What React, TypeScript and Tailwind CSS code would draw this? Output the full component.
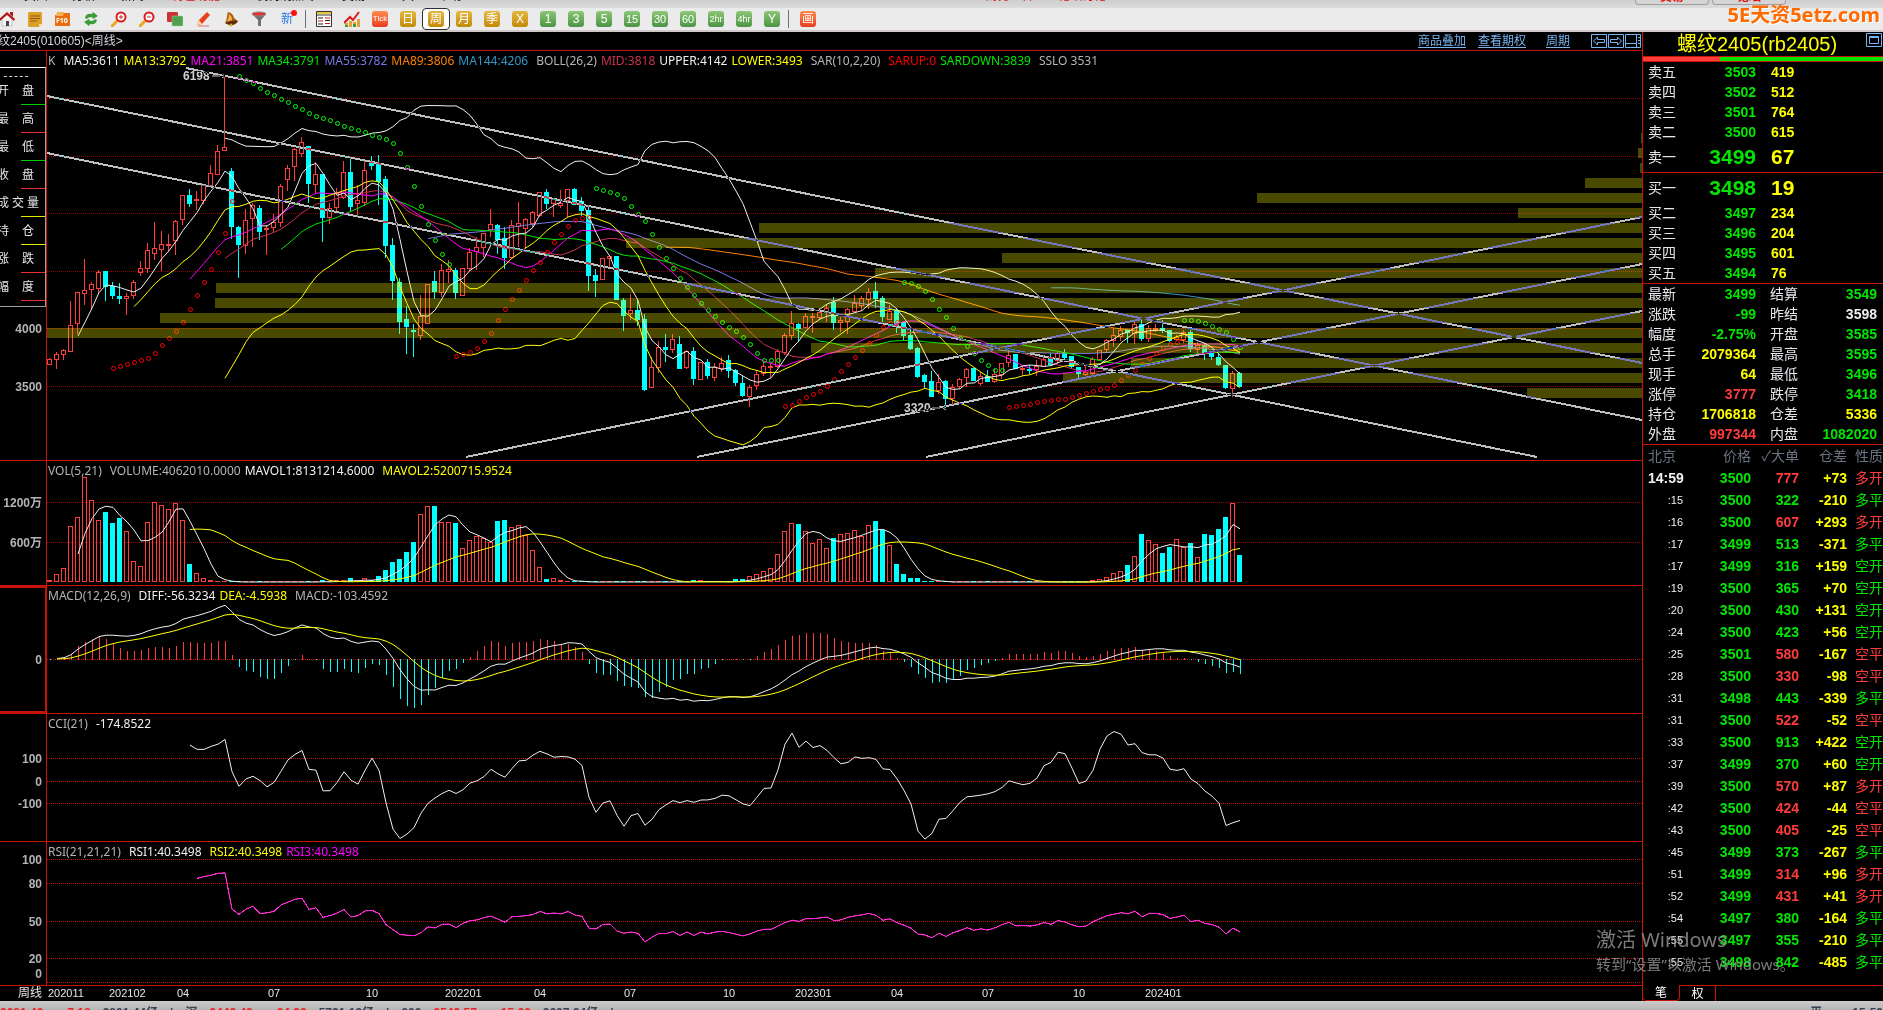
import { ReactNode } from "react";

const UI = "font-['Noto_Sans','Noto_Sans_CJK_SC',sans-serif]";
const NUM = "font-['Liberation_Sans','Noto_Sans_CJK_SC',sans-serif]";

const RED = "#ff3c3c";
const CYAN = "#00ffff";
const STEP = 7;

// one bar per week: [high, body top, body bottom, low, volume], negative volume = falling week
const BARS = [
  [358, 359, 364, 364, 2], [352, 354, 359, 369, 8], [349, 350, 354, 360, 14], [301, 325, 351, 351, 56],
  [292, 292, 323, 334, 65], [259, 290, 293, 305, 105], [282, 284, 289, 310, 82], [270, 272, 288, 293, 62],
  [271, 271, 287, 301, -70], [282, 286, 296, 299, -59], [283, 296, 299, 304, -64], [293, 296, 298, 315, 51],
  [280, 282, 295, 299, 21], [261, 268, 272, 276, 16], [243, 250, 268, 273, 60], [222, 248, 253, 260, 80],
  [231, 244, 249, 271, 77], [234, 244, 245, 252, 73], [220, 221, 240, 255, 79], [195, 195, 219, 225, 62],
  [189, 195, 204, 207, -18], [191, 199, 200, 210, 9], [185, 185, 200, 204, 4], [165, 173, 185, 185, 2],
  [145, 151, 174, 174, 1], [76, 147, 150, 151, 1], [168, 171, 227, 239, -1], [226, 227, 245, 278, -1],
  [209, 220, 245, 254, 1], [203, 205, 218, 247, 1], [205, 208, 232, 240, -1], [225, 228, 229, 255, 1],
  [214, 222, 227, 232, 1], [184, 186, 222, 227, 1], [165, 168, 179, 191, 1], [148, 149, 166, 181, 1],
  [137, 142, 153, 157, 1], [146, 146, 184, 203, -1], [162, 174, 184, 194, 1], [174, 174, 218, 242, -2],
  [203, 208, 217, 224, 1], [188, 193, 207, 211, 2], [161, 172, 197, 199, 2], [158, 172, 207, 212, -4],
  [185, 200, 203, 216, 2], [161, 170, 202, 206, 4], [156, 162, 166, 170, -2], [155, 163, 182, 205, -6],
  [176, 179, 246, 258, -12], [238, 245, 281, 300, -20], [278, 282, 322, 334, -23], [306, 319, 327, 354, -30],
  [324, 330, 332, 357, -40], [295, 316, 335, 340, 68], [284, 284, 323, 324, 76], [271, 281, 292, 299, -76],
  [264, 270, 292, 297, 60], [260, 269, 271, 283, 60], [268, 270, 293, 299, -59], [268, 268, 295, 296, 34],
  [248, 252, 268, 271, 42], [237, 247, 251, 270, 46], [233, 233, 247, 257, 44], [209, 224, 229, 237, 40],
  [224, 225, 240, 254, -61], [227, 238, 258, 269, -62], [220, 225, 257, 259, 55], [202, 223, 226, 247, 57],
  [218, 219, 228, 248, 47], [211, 212, 223, 228, 32], [192, 192, 215, 217, 15], [189, 192, 204, 209, -3],
  [198, 199, 203, 217, 4], [190, 203, 205, 208, 2], [189, 189, 200, 217, 1], [188, 189, 205, 205, -1],
  [197, 201, 211, 216, -1], [205, 210, 276, 291, -1], [269, 275, 281, 297, -1], [258, 258, 279, 279, 1],
  [256, 256, 258, 267, 1], [256, 256, 300, 300, -1], [298, 300, 316, 331, -1], [294, 310, 313, 320, 1],
  [300, 310, 320, 326, -1], [314, 319, 390, 391, -1], [357, 367, 387, 387, 1], [341, 347, 367, 373, 1],
  [334, 347, 350, 362, -1], [334, 339, 349, 353, 1], [336, 344, 369, 369, -1], [350, 351, 367, 369, 1],
  [347, 351, 379, 385, -2], [362, 362, 379, 379, 2], [359, 362, 376, 379, -1], [363, 367, 377, 381, 1],
  [357, 363, 368, 372, 1], [355, 360, 371, 378, -1], [369, 370, 383, 386, -3], [376, 383, 396, 397, -3],
  [385, 387, 396, 407, 6], [371, 374, 385, 390, 8], [362, 366, 373, 376, 11], [363, 366, 367, 378, 14],
  [349, 351, 366, 368, 28], [333, 335, 352, 355, 51], [311, 323, 335, 340, 59], [323, 324, 329, 341, -58],
  [313, 316, 327, 327, 51], [313, 316, 317, 333, 39], [308, 312, 317, 320, 43], [305, 308, 312, 322, 34],
  [297, 302, 323, 330, -44], [317, 320, 322, 332, 48], [308, 309, 321, 334, 49], [295, 303, 311, 311, 52],
  [296, 298, 305, 311, 46], [288, 292, 299, 309, 57], [282, 291, 299, 308, -61], [296, 298, 317, 323, -52],
  [305, 311, 319, 319, 37], [309, 310, 326, 333, -18], [322, 322, 336, 340, -8], [330, 335, 349, 350, -4],
  [347, 348, 377, 378, -4], [374, 375, 382, 388, -1], [371, 381, 397, 397, -1], [374, 382, 390, 394, 1],
  [380, 381, 399, 408, -1], [384, 387, 398, 405, 1], [378, 379, 386, 389, 1], [368, 369, 377, 387, 1],
  [368, 368, 381, 381, -1], [372, 376, 383, 386, 1], [370, 376, 382, 382, -1], [369, 374, 381, 383, 1],
  [363, 363, 374, 379, 1], [350, 355, 362, 367, 1], [354, 354, 369, 369, -1], [365, 368, 369, 375, 1],
  [365, 369, 370, 374, -1], [360, 366, 369, 376, 1], [355, 359, 366, 367, 1], [353, 357, 365, 365, -1],
  [352, 353, 360, 364, 1], [349, 353, 358, 360, -1], [356, 356, 367, 369, -1], [367, 367, 374, 378, -1],
  [365, 372, 374, 376, 1], [357, 359, 373, 377, 2], [350, 350, 359, 359, 3], [339, 340, 349, 352, 5],
  [328, 335, 340, 347, 9], [326, 330, 336, 341, 11], [330, 330, 333, 343, -17], [322, 324, 333, 344, 26],
  [320, 324, 339, 341, -48], [325, 328, 338, 342, 42], [324, 328, 329, 332, 38], [320, 328, 331, 333, -29],
  [330, 330, 341, 342, -35], [335, 337, 339, 341, 43], [330, 332, 339, 343, 35], [330, 332, 349, 352, -39],
  [342, 345, 349, 353, 25], [343, 345, 354, 360, -48], [352, 352, 357, 360, -47], [354, 357, 365, 366, -53],
  [365, 365, 388, 389, -65], [371, 373, 388, 397, 79], [372, 373, 387, 387, -27],
];

const SAR = [
  { from: 9, color: "#ff0000", ys: [368, 366, 364, 362, 360, 358, 353, 345, 338, 331, 322, 309, 295, 282, 269, 252, 233, 201] },
  { from: 27, color: "#00ff00", ys: [76, 80, 83, 88, 92, 95, 99, 102, 106, 109, 113, 116, 118, 120, 123, 126, 128, 130, 132, 135, 137, 139, 143, 153, 167, 186, 206, 224, 240, 254, 264] },
  { from: 58, color: "#ff0000", ys: [356, 354, 352, 348, 341, 333, 320, 309, 299, 290, 280, 270, 262, 252, 242, 234, 226, 220, 218, 217] },
  { from: 78, color: "#00ff00", ys: [188, 190, 192, 194, 198, 206, 214, 221, 234, 247, 258, 268, 278, 287, 295, 303, 310, 316, 322, 327, 331, 337, 344, 353, 360, 360, 360] },
  { from: 105, color: "#ff0000", ys: [406, 405, 401, 397, 394, 391, 386, 379, 371, 364, 357, 350, 343, 335, 327, 323, 322] },
  { from: 122, color: "#00ff00", ys: [282, 283, 286, 291, 299, 309, 317, 328, 338, 346, 353, 360, 365, 370, 370] },
  { from: 137, color: "#ff0000", ys: [407, 406, 405, 404, 402, 401, 400, 399, 399, 397, 395, 393, 391, 389, 388, 385, 380, 375, 370, 364, 358, 353, 348, 344, 342] },
  { from: 162, color: "#00ff00", ys: [320, 320, 321, 323, 326, 329, 332, 339, 347] },
];

// left edge of each volume-by-price band, 15px apart
const BANDS = [1641, 1638, 1640, 1585, 1257, 1518, 759, 626, 1002, 875, 216, 215, 160, 47, 811, 1131, 1063, 1527];

const TRENDS = [
  [186, 68, 1642, 363], [47, 96, 1642, 420], [47, 153, 1537, 457],
  [466, 457, 1642, 217], [697, 457, 1642, 264], [926, 457, 1642, 311],
];

const close = BARS.map((b) => (b[4] > 0 ? b[1] : b[2]));
const volume = BARS.map((b) => Math.abs(b[4]));

function ma(src: number[], n: number) {
  return src.map((_, i) => {
    if (i < n - 1) return NaN;
    let sum = 0;
    for (let k = i - n + 1; k <= i; k++) sum += src[k];
    return sum / n;
  });
}

function ema(src: number[], n: number) {
  const out: number[] = [];
  src.forEach((v, i) => out.push(i === 0 ? v : (2 * v + (n - 1) * out[i - 1]) / (n + 1)));
  return out;
}

const mid = ma(close, 26);
const dev = close.map((_, i) => {
  if (i < 25) return NaN;
  let sum = 0;
  for (let k = i - 25; k <= i; k++) sum += (close[k] - mid[i]) ** 2;
  return Math.sqrt(sum / 25);
});

const fast = ema(close, 12);
const slow = ema(close, 26);
const diff = close.map((_, i) => (slow[i] - fast[i]) * 1.236);
const dea = ema(diff, 9);

const typical = BARS.map((b, i) => -(b[0] + b[3] + close[i]) / 3);
const typicalMa = ma(typical, 21);
const cci = typical.map((v, i) => {
  if (i < 20) return NaN;
  let sum = 0;
  for (let k = i - 20; k <= i; k++) sum += Math.abs(typical[k] - typicalMa[i]);
  return (v - typicalMa[i]) / ((0.015 * sum) / 21);
});

let gain = 0;
let move = 0;
const rsi = close.map((v, i) => {
  if (i === 0) return NaN;
  const d = close[i - 1] - v;
  gain = (Math.max(d, 0) + 20 * gain) / 21;
  move = (Math.abs(d) + 20 * move) / 21;
  return i < 21 ? NaN : (gain / move) * 100;
});

function Line({ ys, color, crisp }: { ys: number[]; color: string; crisp?: boolean }) {
  const points = ys
    .map((y, i) => (isNaN(y) ? "" : `${3 + i * STEP},${Math.round(y * 10) / 10}`))
    .filter(Boolean)
    .join(" ");
  return <polyline points={points} fill="none" stroke={color} shapeRendering={crisp ? "crispEdges" : "auto"} />;
}

function Grid({ rows, color = "#c01010" }: { rows: number[]; color?: string }) {
  return (
    <g stroke={color} strokeDasharray="1 1" shapeRendering="crispEdges">
      {rows.map((y) => (
        <line key={y} x1="0" x2="100%" y1={y + 0.5} y2={y + 0.5} />
      ))}
    </g>
  );
}

type Legend = { text: string; color: string; gap?: boolean };

function Panel({ height, labels, legend, active, children }: {
  height: number;
  labels: [string, number][];
  legend: Legend[];
  active?: boolean;
  children: ReactNode;
}) {
  return (
    <section className="flex border-b border-[#c81408] shrink-0">
      <svg
        className={`w-[47px] shrink-0 border-[#c81408] ${active ? "border-2 border-l-0" : "border-r"} ${NUM}`}
        height={height}
      >
        {labels.map(([text, y]) => (
          <text key={text + y} x={42} y={y} textAnchor="end" fontSize="12" fontWeight="bold" fill="#b4b4b4">
            {text}
          </text>
        ))}
      </svg>
      <div className="relative flex-1 min-w-0">
        <svg className="block w-full" height={height}>{children}</svg>
        <p className={`absolute left-px top-[1px] flex gap-1 text-xs leading-[18px] whitespace-nowrap ${UI}`}>
          {legend.map((l) => (
            <span key={l.text} className={l.gap ? "ml-1" : ""} style={{ color: l.color }}>{l.text}</span>
          ))}
        </p>
      </div>
    </section>
  );
}

function PriceChart() {
  return (
    <>
      <Grid rows={[47, 105, 162, 220, 277, 335]} color="#8c0404" />
      <g transform="translate(0 -51)" shapeRendering="crispEdges">
        {BARS.map(([high, top, bottom, low, vol], i) => {
          const x = i * STEP;
          if (vol < 0) {
            return (
              <g key={i} fill={CYAN}>
                <rect x={x + 2} y={high} width="1" height={Math.max(low - high, 1)} />
                <rect x={x} y={top} width="5" height={Math.max(bottom - top, 2)} />
              </g>
            );
          }
          return (
            <g key={i} fill={RED}>
              <rect x={x + 2} y={high} width="1" height={Math.max(top - high, 0)} />
              <rect x={x + 2} y={bottom} width="1" height={Math.max(low - bottom, 0)} />
              <rect x={x + 0.5} y={top + 0.5} width="4" height={Math.max(bottom - top - 0.5, 1)} fill="none" stroke={RED} />
            </g>
          );
        })}
      </g>
      <g transform="translate(0 -51)">
        <Line ys={ma(close, 144)} color="#3296c8" />
        <Line ys={ma(close, 89)} color="#ff8000" />
        <Line ys={ma(close, 55)} color="#7878e6" />
        <Line ys={mid} color="#c83250" />
        <Line ys={ma(close, 34)} color="#00e600" />
        <Line ys={ma(close, 21)} color="#ff00ff" />
        <Line ys={ma(close, 13)} color="#ffff00" />
        <Line ys={ma(close, 5)} color="#f0f0f0" />
        <Line ys={mid.map((m, i) => m - 2 * dev[i])} color="#f0f0f0" />
        <Line ys={mid.map((m, i) => m + 2 * dev[i])} color="#ffff00" />
        {SAR.map((run) =>
          run.ys.map((y, i) => (
            <circle key={run.from + i} cx={3.5 + (run.from + i) * STEP} cy={y + 0.5} r="2" fill="none" stroke={run.color} />
          ))
        )}
      </g>
      <g transform="translate(-47 -51)">
        {BANDS.map((x, i) => (
          <rect key={i} x={x} y={133 + i * 15} width={1642 - x} height="10" fill="#ffff00" fillOpacity="0.286" />
        ))}
        <text x="183" y="80" fontSize="12" fontWeight="bold" fill="#d0d0d0" className={NUM}>6198</text>
        <text x="904" y="412" fontSize="12" fontWeight="bold" fill="#d0d0d0" className={NUM}>3320</text>
        <path d="M212 76h8M222 74l3 2-3 2M932 408h8M946 406l-3 2 3 2" stroke="#d0d0d0" fill="none" />
        {TRENDS.map(([x1, y1, x2, y2]) => (
          <line
            key={`${x1}-${y1}`}
            x1={x1} y1={y1} x2={x2} y2={y2}
            stroke="#c0c0c0"
            strokeWidth="2"
            className="mix-blend-difference"
            shapeRendering="crispEdges"
          />
        ))}
      </g>
    </>
  );
}

function VolumeChart() {
  return (
    <>
      <Grid rows={[41, 81]} color="#900808" />
      <g shapeRendering="crispEdges">
        {BARS.map(([, , , , vol], i) => {
          const h = Math.abs(vol);
          return vol < 0 || h < 3 ? (
            <rect key={i} x={i * STEP} y={121 - h} width="5" height={h} fill={vol < 0 ? CYAN : RED} />
          ) : (
            <rect key={i} x={i * STEP + 0.5} y={121.5 - h} width="4" height={h - 1} fill="none" stroke={RED} />
          );
        })}
      </g>
      <Line ys={ma(volume, 5).map((v) => 122 - v)} color="#f0f0f0" />
      <Line ys={ma(volume, 21).map((v) => 122 - v)} color="#ffff00" />
    </>
  );
}

function MacdChart() {
  return (
    <>
      <Grid rows={[73]} />
      <g shapeRendering="crispEdges">
        {diff.map((d, i) => {
          const h = Math.round(2 * (d - dea[i]));
          return (
            <rect key={i} x={i * STEP + 3} y={h > 0 ? 74 - h : 73} width="1" height={Math.max(Math.abs(h), 1)} fill={h > 0 ? RED : CYAN} />
          );
        })}
      </g>
      <Line ys={diff.map((d, i) => (i < 1 ? NaN : 73 - d))} color="#f0f0f0" />
      <Line ys={dea.map((d, i) => (i < 1 ? NaN : 73 - d))} color="#ffff00" />
    </>
  );
}

const DATES: [string, number][] = [
  ["202011", 1], ["202102", 62], ["04", 130], ["07", 221], ["10", 319], ["202201", 398], ["04", 487],
  ["07", 577], ["10", 676], ["202301", 748], ["04", 844], ["07", 935], ["10", 1026], ["202401", 1098],
];

const DRAW_FIELDS = [
  { text: ["开", "盘"], color: "bg-[#00d000]" },
  { text: ["最", "高"], color: "bg-[#f03030]" },
  { text: ["最", "低"], color: "bg-[#00d000]" },
  { text: ["收", "盘"], color: "bg-[#f03030]" },
  { text: ["成", "交", "量"], color: "bg-[#e6e600]" },
  { text: ["持", "仓"], color: "bg-[#e6e600]" },
  { text: ["涨", "跌"], color: "bg-[#f03030]" },
  { text: ["幅", "度"], color: "bg-[#f03030]" },
];

function FieldBox() {
  return (
    <div className={`absolute left-0 top-[67px] z-10 w-[46px] h-[240px] bg-black border-t border-t-white border-r border-b border-[#a0a0a0] text-xs text-gray-200 overflow-hidden ${UI}`}>
      <p className="h-[8px] mt-[1px] ml-1 w-6 border-b border-dashed border-gray-300" />
      {DRAW_FIELDS.map((f, i) => (
        <div key={i} className="h-7 flex flex-col justify-between pt-[5px]">
          <div className={`flex -ml-[3px] leading-[18px] ${f.text.length === 3 ? "gap-[3px]" : "gap-[13px]"}`}>
            {f.text.map((t) => (
              <span key={t} className="w-3 shrink-0">{t}</span>
            ))}
          </div>
          <i className={`block h-px ml-[21px] ${f.color}`} />
        </div>
      ))}
    </div>
  );
}

function Cell({ children, label, active }: { children: ReactNode; label: string; active?: boolean }) {
  return (
    <button
      type="button"
      aria-label={label}
      className={`w-7 h-[22px] shrink-0 flex items-center justify-center ${active ? "bg-white border border-[#303030] rounded-sm" : ""}`}
    >
      {children}
    </button>
  );
}

function Badge({ text, tone }: { text: string; tone: "gold" | "green" | "red" }) {
  const tones = {
    gold: "from-[#e3b840] to-[#c48a00]",
    green: "from-[#8cc878] to-[#4c9444]",
    red: "from-[#ff8a50] to-[#e83c20]",
  };
  const sizes = ["text-xs", "text-xs", "text-[11px]", "text-[9px]", "text-[8px]"];
  return (
    <span className={`w-4 h-4 rounded-[3px] bg-linear-to-b ${tones[tone]} text-white flex items-center justify-center whitespace-nowrap leading-none ${sizes[text.length]} ${NUM}`}>
      {text}
    </span>
  );
}

const ICONS: { label: string; art: ReactNode }[] = [
  {
    label: "首页",
    art: (
      <>
        <path d="M3 8l5-5 5 5v7H3z" fill="#f4f4f4" stroke="#999" strokeWidth=".5" />
        <path d="M0 8 8 1l8 7-1 2-7-6-7 6z" fill="#b01818" />
        <path d="M7 10h3v5H7z" fill="#444" /><path d="M11 1h3v5l-3-3z" fill="#b01818" />
      </>
    ),
  },
  {
    label: "便签",
    art: (
      <>
        <path d="M1 2q0-1 2-1h11q1 0 1 2v10l-3 3H2q-1 0-1-2z" fill="#dca028" />
        <path d="M3 5h10M3 7.500h10M3 10h7" stroke="#8c5a0a" /><path d="M12 16v-3h3z" fill="#fbe29a" />
      </>
    ),
  },
  {
    label: "F10",
    art: (
      <>
        <path d="M0 4h6l1-2h8v13H0z" fill="#e86c10" /><path d="M2 1h7l-1 4H1z" fill="#f7b050" />
        <text x="1" y="12" fontSize="7" fontWeight="bold" fill="#fff">F10</text>
      </>
    ),
  },
  {
    label: "刷新",
    art: <path d="M2 7q1-5 7-4l1-2 5 4-5 3-1-2q-4 0-5 2zM14 9q-1 5-7 4l-1 2-5-4 5-3 1 2q4 0 5-2z" fill="#3c9c38" />,
  },
  {
    label: "放大",
    art: (
      <>
        <path d="M1 15l5-5" stroke="#e8a820" strokeWidth="3" strokeLinecap="round" />
        <circle cx="10" cy="6" r="4.500" fill="#fff" stroke="#d82020" strokeWidth="2" /><path d="M8 6h4M10 4v4" stroke="#d82020" />
      </>
    ),
  },
  {
    label: "缩小",
    art: (
      <>
        <path d="M1 15l5-5" stroke="#e8a820" strokeWidth="3" strokeLinecap="round" />
        <circle cx="10" cy="6" r="4.500" fill="#fff" stroke="#d82020" strokeWidth="2" /><path d="M8 6h4" stroke="#d82020" />
      </>
    ),
  },
  {
    label: "叠加",
    art: (
      <>
        <rect x="0" y="1" width="11" height="10" rx="1" fill="#cc3434" />
        <rect x="5" y="5" width="11" height="10" rx="1" fill="#50a050" stroke="#9cd09c" strokeWidth=".5" />
      </>
    ),
  },
  {
    label: "画线",
    art: (
      <>
        <path d="M12 1l3 3-8 9-5 1 2-5z" fill="#e8401c" /><path d="M4 9l3 4-5 1z" fill="#ffd8a0" /><path d="M3 15h11" stroke="#e07070" />
      </>
    ),
  },
  {
    label: "预警",
    art: (
      <>
        <path d="M5 1q5 1 6 6l4 3q-2 4-8 4l-5-2q2-3 2-7z" fill="#a85c14" /><path d="M6 3q3 2 3 6l-5 2q2-4 2-8z" fill="#f4b848" />
        <path d="M2 12q6-3 13-2-3 5-9 4z" fill="#602c08" /><circle cx="8" cy="14" r="1.500" fill="#e8a820" />
      </>
    ),
  },
  {
    label: "筛选",
    art: (
      <>
        <path d="M1 3l6 6v6h3V9l5-6z" fill="#707070" /><ellipse cx="8" cy="3" rx="7" ry="2" fill="#e83030" stroke="#888" />
      </>
    ),
  },
];

const PERIODS: { text: string; tone: "gold" | "green" | "red" }[] = [
  { text: "Tick", tone: "red" }, { text: "日", tone: "gold" }, { text: "周", tone: "gold" },
  { text: "月", tone: "gold" }, { text: "季", tone: "gold" }, { text: "X", tone: "gold" },
  { text: "1", tone: "green" }, { text: "3", tone: "green" }, { text: "5", tone: "green" },
  { text: "15", tone: "green" }, { text: "30", tone: "green" }, { text: "60", tone: "green" },
  { text: "2hr", tone: "green" }, { text: "4hr", tone: "green" }, { text: "Y", tone: "green" },
];

function Toolbar() {
  return (
    <header className="relative h-8 shrink-0 bg-[#ebebeb] border-b-2 border-[#d0c8c8] overflow-hidden">
      <nav className={`h-2 overflow-hidden bg-linear-to-b from-[#cecece] to-[#dcdcdc] text-xs ${UI}`}>
        <div className="-mt-3 leading-4 flex gap-6 pl-6 text-black whitespace-nowrap">
          <span>页面</span><span>分析</span><span>新闻</span>
          <span className="ml-1 text-[#e01010]">特色功能</span>
          <span className="ml-3 w-[62px] overflow-hidden">机构观点专栏</span>
          <span>交易</span><span>工具</span><span>帮助</span>
          <span className="ml-[500px] text-[#e01010]">财务人群</span><span className="text-[#e01010]">论坛讨论</span>
        </div>
      </nav>
      <div className="flex items-center h-[22px] -ml-[7px]">
        {ICONS.map((icon) => (
          <Cell key={icon.label} label={icon.label}>
            <svg width="16" height="16" viewBox="0 0 16 16" fill="none">{icon.art}</svg>
          </Cell>
        ))}
        <Cell label="新">
          <span className={`relative text-xs leading-4 text-[#2878e0] ${UI}`}>
            新<i className="absolute -right-1 -top-px w-[6px] h-[6px] rounded-full bg-[#ff1010]" />
          </span>
        </Cell>
        <i className="w-px h-[18px] mx-1 bg-gray-500" />
        <Cell label="报价">
          <svg width="16" height="16" viewBox="0 0 16 16">
            <path d="M.5 .5h15v15H.500z" fill="#fff" stroke="#333" /><path d="M1 1h14v2H1z" fill="#e8c840" /><path d="M1 4h14" stroke="#333" />
            <path d="M2 7h5M2 13h5M9 9.500h5" stroke="#222" /><path d="M2 10h5M9 7h5M9 12.500h5" stroke="#c02020" />
          </svg>
        </Cell>
        <Cell label="走势">
          <svg width="16" height="16" viewBox="0 0 16 16" fill="none">
            <path d="M1 12h3v4H1zM5 10h3v6H5zM9 11h3v5H9zM13 8h3v8h-3z" fill="#e8a030" /><path d="M0 12l6-6 3 3 6-8" stroke="#e01818" strokeWidth="2" />
            <path d="M1 14h3v2H1zM9 13h3v3H9z" fill="#38a038" />
          </svg>
        </Cell>
        {PERIODS.map((p) => (
          <Cell key={p.text} label={p.text} active={p.text === "周"}>
            <Badge {...p} />
          </Cell>
        ))}
        <i className="w-px h-[18px] ml-[2px] mr-[5px] bg-gray-500" />
        <Cell label="画"><Badge text="画" tone="red" /></Cell>
      </div>
      <div className={`absolute right-[97px] top-0 flex gap-[3px] text-xs ${UI}`}>
        {["交易", "论坛"].map((t) => (
          <button key={t} type="button" className="w-[74px] h-[5px] overflow-hidden rounded-b border border-t-0 border-[#a0a0a0] bg-[#d4d4d4] text-[#e01010] font-bold">
            <span className="block -mt-[11px] leading-4">{t}</span>
          </button>
        ))}
      </div>
      <p className="absolute right-[3px] top-[3px] text-[20px] leading-6 font-bold text-[#ff6a00] font-['Noto_Sans','Noto_Sans_CJK_SC',sans-serif] [text-shadow:1px_1px_0_#fff]">
        5E天资5etz.com
      </p>
    </header>
  );
}

const ASKS = [["卖五", "3503", "419"], ["卖四", "3502", "512"], ["卖三", "3501", "764"], ["卖二", "3500", "615"], ["卖一", "3499", "67"]];
const BIDS = [["买一", "3498", "19"], ["买二", "3497", "234"], ["买三", "3496", "204"], ["买四", "3495", "601"], ["买五", "3494", "76"]];

const G = "text-[#00e600]";
const R = "text-[#ff3c3c]";
const Y = "text-[#ffff00]";
const W = "text-[#f0f0f0]";

const STATS = [
  ["最新", "3499", G, "结算", "3549", G],
  ["涨跌", "-99", G, "昨结", "3598", W],
  ["幅度", "-2.75%", G, "开盘", "3585", G],
  ["总手", "2079364", Y, "最高", "3595", G],
  ["现手", "64", Y, "最低", "3496", G],
  ["涨停", "3777", R, "跌停", "3418", G],
  ["持仓", "1706818", Y, "仓差", "5336", Y],
  ["外盘", "997344", R, "内盘", "1082020", G],
];

const TICKS: [string, number, number, string, string, boolean][] = [
  ["14:59", 3500, 777, "+73", "多开", true], [":15", 3500, 322, "-210", "多平", false],
  [":16", 3500, 607, "+293", "多开", true], [":17", 3499, 513, "-371", "多平", false],
  [":17", 3499, 316, "+159", "空开", false], [":19", 3500, 365, "+70", "空开", false],
  [":20", 3500, 430, "+131", "空开", false], [":24", 3500, 423, "+56", "空开", false],
  [":25", 3501, 580, "-167", "空平", true], [":28", 3500, 330, "-98", "空平", true],
  [":31", 3498, 443, "-339", "多平", false], [":31", 3500, 522, "-52", "空平", true],
  [":33", 3500, 913, "+422", "空开", false], [":37", 3499, 370, "+60", "空开", false],
  [":39", 3500, 570, "+87", "多开", true], [":42", 3500, 424, "-44", "空平", true],
  [":43", 3500, 405, "-25", "空平", true], [":45", 3499, 373, "-267", "多平", false],
  [":51", 3499, 314, "+96", "多开", true], [":52", 3499, 431, "+41", "多开", true],
  [":54", 3497, 380, "-164", "多平", false], [":55", 3497, 355, "-210", "多平", false],
  [":55", 3498, 842, "-485", "多平", false],
];

function Book({ rows }: { rows: string[][] }) {
  return (
    <div className="border-b border-[#c81408]">
      <table className="w-full table-fixed">
        <tbody>
          {rows.map(([name, price, qty]) => {
            const best = name.endsWith("一");
            return (
              <tr key={name} className={best ? "h-[30px]" : "h-5"}>
                <th className="w-[42px] p-0 pl-[5px] text-left font-normal text-gray-200">{name}</th>
                <td className={`w-[71px] p-0 text-right font-bold ${G} ${best ? "text-[21px] leading-[30px]" : ""}`}>{price}</td>
                <td className={`p-0 pl-[15px] font-bold ${Y} ${best ? "text-[21px] leading-[30px]" : ""}`}>{qty}</td>
              </tr>
            );
          })}
        </tbody>
      </table>
    </div>
  );
}

function Sidebar() {
  return (
    <aside className={`w-[241px] shrink-0 flex flex-col border-l border-[#c81408] text-sm leading-5 ${NUM}`}>
      <div className="relative h-6 shrink-0 flex items-center pl-[34px] text-xl leading-6 text-[#ffff00] whitespace-nowrap">
        螺纹2405(rb2405)
        <svg className="absolute right-px top-px" width="16" height="14" fill="none" stroke="#78b4f0">
          <path d="M.5 .5h15v13H.500zM3.500 3.500h9v7h-9zM3.500 4.500h9" />
        </svg>
      </div>
      <div className="h-[6px] shrink-0 flex border-y border-[#c81408]">
        <i className="w-[77px] bg-[#ff3c3c]" />
        <i className="flex-1 bg-[#00e600]" />
      </div>
      <Book rows={ASKS} />
      <Book rows={BIDS} />
      <table className="w-full table-fixed">
        <tbody>
          {STATS.map(([a, av, ac, b, bv, bc]) => (
            <tr key={a} className="h-5">
              <th className="w-[42px] p-0 pl-[5px] text-left font-normal text-gray-200">{a}</th>
              <td className={`w-[71px] p-0 text-right font-bold ${ac}`}>{av}</td>
              <th className="w-[50px] p-0 pl-[14px] text-left font-normal text-gray-200">{b}</th>
              <td className={`p-0 pr-[6px] text-right font-bold ${bc}`}>{bv}</td>
            </tr>
          ))}
        </tbody>
      </table>
      <div className="border-t border-[#c81408]">
        <table className="w-full table-fixed">
          <thead>
            <tr className="h-[22px] text-gray-500 whitespace-nowrap">
              <th className="w-[40px] p-0 pl-[5px] text-left font-normal">北京</th>
              <th className="w-[68px] p-0 text-right font-normal">价格</th>
              <th className="w-[48px] p-0 text-right font-normal">✓大单</th>
              <th className="w-[48px] p-0 text-right font-normal">仓差</th>
              <th className="p-0 pl-2 text-left font-normal">性质</th>
            </tr>
          </thead>
          <tbody>
            {TICKS.map(([time, price, qty, delta, kind, up], i) => (
              <tr key={i} className="h-[22px] font-bold whitespace-nowrap">
                <td className={`p-0 ${W} ${i === 0 ? "pl-[5px]" : "text-right text-[11px] font-normal"}`}>{time}</td>
                <td className={`p-0 text-right ${G}`}>{price}</td>
                <td className={`p-0 text-right ${up ? R : G}`}>{qty}</td>
                <td className={`p-0 text-right ${Y}`}>{delta}</td>
                <td className={`p-0 pl-2 font-normal ${up ? R : G}`}>{kind}</td>
              </tr>
            ))}
          </tbody>
        </table>
      </div>
      <div className="mt-auto h-4 flex text-xs leading-4 text-white" role="tablist">
        <button type="button" role="tab" aria-selected="true" className="w-[37px] rounded-b-sm border-b border-r border-[#c81408]">笔</button>
        <button type="button" role="tab" aria-selected="false" className="w-9 border-t border-r border-[#c81408]">权</button>
        <i className="flex-1 border-t border-[#c81408]" />
      </div>
    </aside>
  );
}

const MA_LEGEND: Legend[] = [
  { text: "K", color: "#b4b4b4" }, { text: "MA5:3611", color: "#f0f0f0", gap: true },
  { text: "MA13:3792", color: "#ffff00" }, { text: "MA21:3851", color: "#ff00ff" },
  { text: "MA34:3791", color: "#00e600" }, { text: "MA55:3782", color: "#7878e6" },
  { text: "MA89:3806", color: "#ff8000" }, { text: "MA144:4206", color: "#3296c8" },
  { text: "BOLL(26,2)", color: "#b4b4b4", gap: true }, { text: "MID:3818", color: "#c83250" },
  { text: "UPPER:4142", color: "#f0f0f0" }, { text: "LOWER:3493", color: "#ffff00" },
  { text: "SAR(10,2,20)", color: "#b4b4b4", gap: true }, { text: "SARUP:0", color: "#ff0000", gap: true },
  { text: "SARDOWN:3839", color: "#00e600" }, { text: "SSLO 3531", color: "#b4b4b4", gap: true },
];

export default function App() {
  return (
    <div className="min-h-screen w-full flex flex-col bg-black overflow-hidden">
      <Toolbar />
      <main className="relative flex flex-1">
        <div className="flex-1 min-w-0 flex flex-col">
          <div className={`h-[19px] shrink-0 flex items-center border-b border-[#c81408] text-xs ${NUM}`}>
            <h1 className="-ml-[2px] text-gray-300">纹2405(010605)&lt;周线&gt;</h1>
            <div className="ml-auto flex items-center text-[#78b4f0] underline underline-offset-2">
              <a href="#overlay" className="mr-3">商品叠加</a>
              <a href="#options" className="mr-5">查看期权</a>
              <a href="#period" className="mr-[21px]">周期</a>
            </div>
            <svg width="51" height="14" fill="none" stroke="#78b4f0">
              <path d="M.5 .5h15v13H.500zM17.500 .5h15v13h-15zM34.500 .5h15v13h-15z" />
              <path d="M2.500 7l4-4v2.500h7v3h-7V11zM30.500 7l-4-4v2.500h-7v3h7V11z" />
              <path d="M34.500 9.500h11M45.500 .5v13M47 3.500h2M47 6.500h2M47 9.500h2" />
            </svg>
          </div>
          <Panel height={409} labels={[["4000", 282], ["3500", 340]]} legend={MA_LEGEND}>
            <PriceChart />
          </Panel>
          <Panel
            height={124}
            labels={[["1200万", 46], ["600万", 86]]}
            legend={[
              { text: "VOL(5,21)", color: "#b4b4b4" }, { text: "VOLUME:4062010.0000", color: "#b4b4b4", gap: true },
              { text: "MAVOL1:8131214.6000", color: "#f0f0f0" }, { text: "MAVOL2:5200715.9524", color: "#ffff00", gap: true },
            ]}
          >
            <VolumeChart />
          </Panel>
          <Panel
            height={127}
            active
            labels={[["0", 76]]}
            legend={[
              { text: "MACD(12,26,9)", color: "#b4b4b4" }, { text: "DIFF:-56.3234", color: "#f0f0f0", gap: true },
              { text: "DEA:-4.5938", color: "#ffff00" }, { text: "MACD:-103.4592", color: "#b4b4b4", gap: true },
            ]}
          >
            <MacdChart />
          </Panel>
          <Panel
            height={127}
            labels={[["100", 49], ["0", 72], ["-100", 94]]}
            legend={[{ text: "CCI(21)", color: "#b4b4b4" }, { text: "-174.8522", color: "#f0f0f0", gap: true }]}
          >
            <Grid rows={[44, 67, 89]} />
            <Line ys={cci.map((v) => 67 - v * 0.227)} color="#f0f0f0" />
          </Panel>
          <Panel
            height={143}
            labels={[["100", 22], ["80", 46], ["50", 84], ["20", 121], ["0", 136]]}
            legend={[
              { text: "RSI(21,21,21)", color: "#b4b4b4" }, { text: "RSI1:40.3498", color: "#f0f0f0", gap: true },
              { text: "RSI2:40.3498", color: "#ffff00", gap: true }, { text: "RSI3:40.3498", color: "#ff00ff" },
            ]}
          >
            <Grid rows={[17, 41, 79, 116, 140]} />
            <Line ys={rsi.map((v) => 140 - v * 1.23)} color="#ff5096" />
            <Line ys={rsi.map((v) => 140 - v * 1.23)} color="#ff28dc" crisp />
          </Panel>
          <svg className={`block w-full ${NUM}`} height="15" fill="#e6e6e6" fontSize="11">
            <text x="42" y="11" textAnchor="end" fontSize="12">周线</text>
            {DATES.map(([text, x]) => (
              <text key={x} x={x + 47} y="11">{text}</text>
            ))}
          </svg>
        </div>
        <Sidebar />
        <div className={`absolute right-[93px] bottom-[27px] w-[194px] text-[#9a9a9a]/80 pointer-events-none whitespace-nowrap ${UI}`}>
          <p className="text-xl leading-7">激活 Windows</p>
          <p className="text-[15px] leading-5">转到“设置”以激活 Windows。</p>
        </div>
      </main>
      <FieldBox />
      <footer className={`h-[9px] shrink-0 overflow-hidden bg-linear-to-b from-[#cccccc] to-[#b4b4b4] text-xs leading-4 font-bold flex gap-6 whitespace-nowrap ${NUM}`}>
        <p className="mt-1 flex gap-3 text-gray-700">
          <span className="text-[#f02020]">3081.42</span><span className="text-[#f02020]">▲7.18</span>
          <span>3801.44亿</span><span>|</span><span>深</span>
          <span className="text-[#f02020]">9442.42</span><span className="text-[#f02020]">▲24.33</span>
          <span>5731.19亿</span><span>|</span><span>300</span>
          <span className="text-[#f02020]">3549.57</span><span className="text-[#f02020]">▲15.66</span><span>2607.64亿</span><span>|</span>
        </p>
        <p className="mt-1 ml-auto flex gap-3 text-gray-700"><span>▲</span><span>平</span><span>↓</span><span>15:59</span></p>
      </footer>
    </div>
  );
}
